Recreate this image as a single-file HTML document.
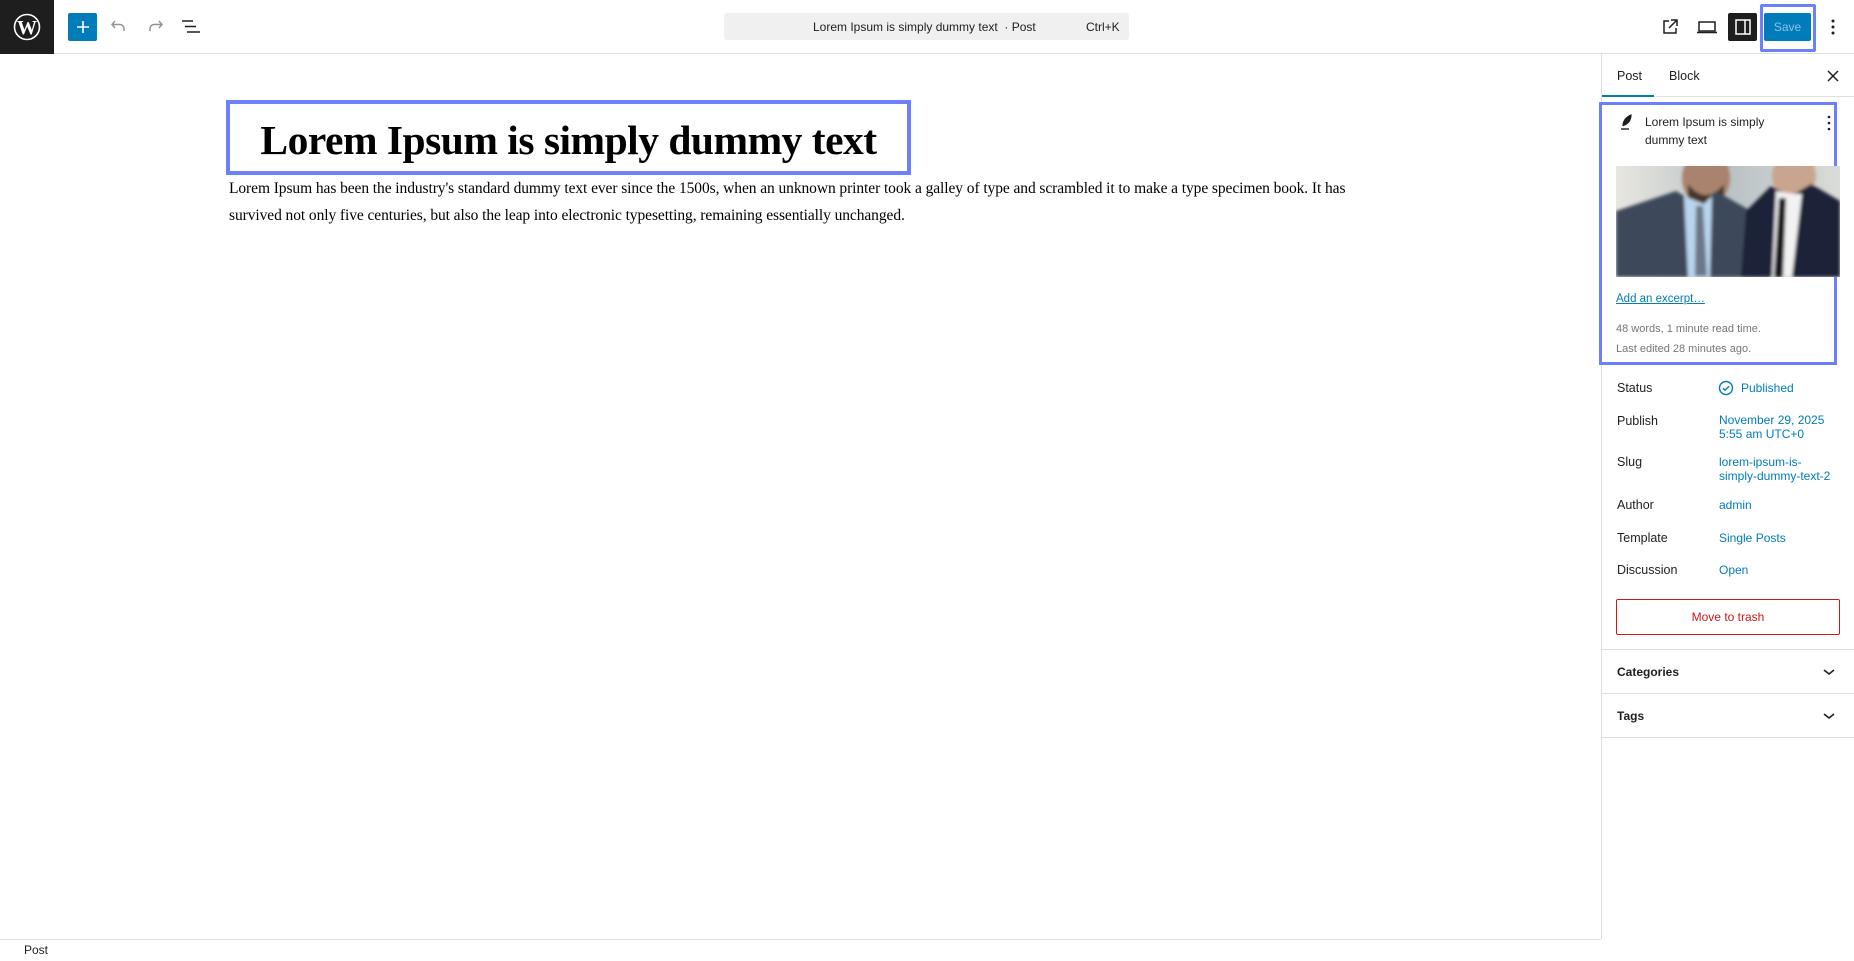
<!DOCTYPE html>
<html><head><meta charset="utf-8"><style>
*{margin:0;padding:0;box-sizing:border-box}
body{width:1854px;height:961px;overflow:hidden;background:#fff;font-family:"Liberation Sans",sans-serif;color:#1e1e1e;position:relative}
.a{position:absolute}
.t{font-size:13px;white-space:nowrap}
.lbl{position:absolute;left:1617px;font-size:12.5px;color:#1e1e1e}
.val{position:absolute;left:1719px;font-size:12px;color:#007cba;line-height:13px}
.hr{position:absolute;left:1602px;width:252px;height:1px;background:#e0e0e0}
</style></head><body>
<!-- top bar -->
<div class="a" style="left:0;top:0;width:1854px;height:54px;border-bottom:1px solid #e0e0e0"></div>
<div class="a" style="left:0;top:0;width:54px;height:54px;background:#1e1e1e"></div>
<svg class="a" style="left:13px;top:13px" width="28" height="28" viewBox="0 0 28 28"><circle cx="14" cy="14" r="12.5" fill="none" stroke="#fff" stroke-width="1.6"/><text x="14" y="21" text-anchor="middle" font-family="Liberation Serif" font-weight="bold" font-size="20" fill="#fff">W</text></svg>
<div class="a" style="left:68px;top:13px;width:29px;height:28px;background:#007cba;border-radius:2px"></div>
<svg class="a" style="left:74px;top:18px" width="18" height="18"><path d="M9 3v12M3 9h12" stroke="#fff" stroke-width="1.6"/></svg>
<svg class="a" style="left:109px;top:16px" width="20" height="20" viewBox="0 0 20 20"><path d="M6 5L3 8.5 6 12M3 8.5h8a4 4 0 0 1 4 4V15" fill="none" stroke="#949494" stroke-width="1.5"/></svg>
<svg class="a" style="left:145px;top:16px" width="20" height="20" viewBox="0 0 20 20"><path d="M14 5l3 3.5-3 3.5M17 8.5H9a4 4 0 0 0-4 4V15" fill="none" stroke="#949494" stroke-width="1.5"/></svg>
<svg class="a" style="left:181px;top:18px" width="20" height="18"><path d="M1 3h11M4 8.5h11M6 14h13" stroke="#1e1e1e" stroke-width="1.6"/></svg>
<div class="a" style="left:724px;top:13px;width:405px;height:27px;background:#f0f0f0;border-radius:3px"></div>
<div class="a t" style="left:813px;top:20px;font-size:12px;color:#1e1e1e">Lorem Ipsum is simply dummy text &nbsp;· Post</div>
<div class="a t" style="left:1086px;top:20px;font-size:12px">Ctrl+K</div>
<svg class="a" style="left:1660px;top:17px" width="20" height="20" viewBox="0 0 20 20"><path d="M9 4H4v12h12v-5M11 3h6v6M17 3l-8 8" fill="none" stroke="#1e1e1e" stroke-width="1.5"/></svg>
<svg class="a" style="left:1695px;top:17px" width="24" height="20" viewBox="0 0 24 20"><rect x="4" y="5" width="16" height="9" fill="none" stroke="#1e1e1e" stroke-width="1.5"/><path d="M2 15.5h20" stroke="#1e1e1e" stroke-width="1.5"/></svg>
<div class="a" style="left:1728px;top:13px;width:29px;height:28px;background:#1e1e1e;border-radius:2px"></div>
<svg class="a" style="left:1733px;top:17px" width="20" height="20" viewBox="0 0 20 20"><rect x="3" y="3" width="14" height="14" fill="none" stroke="#fff" stroke-width="1.5"/><path d="M12 3v14" stroke="#fff" stroke-width="1.5"/></svg>
<div class="a" style="left:1760px;top:4px;width:56px;height:48px;border:3px solid #6b80f9;border-radius:2px"></div>
<div class="a" style="left:1764px;top:13px;width:47px;height:28px;background:#007cba;border-radius:2px;color:#8cc3e6;font-size:12px;text-align:center;line-height:28px">Save</div>
<svg class="a" style="left:1826px;top:16px" width="14" height="22"><circle cx="7" cy="5" r="1.5" fill="#1e1e1e"/><circle cx="7" cy="11" r="1.5" fill="#1e1e1e"/><circle cx="7" cy="17" r="1.5" fill="#1e1e1e"/></svg>

<!-- editor -->
<div class="a" style="left:226px;top:100px;width:685px;height:75px;border:4px solid #6b80f9"></div>
<div class="a" style="left:230px;top:116px;width:677px;text-align:center;font-family:'Liberation Serif',serif;font-weight:bold;font-size:41.5px;white-space:nowrap;letter-spacing:-0.5px;color:#000">Lorem Ipsum is simply dummy text</div>
<div class="a" style="left:229px;top:175px;font-family:'Liberation Serif',serif;font-size:15.5px;line-height:27px;white-space:nowrap;color:#000;letter-spacing:-0.08px">Lorem Ipsum has been the industry's standard dummy text ever since the 1500s, when an unknown printer took a galley of type and scrambled it to make a type specimen book. It has<br>survived not only five centuries, but also the leap into electronic typesetting, remaining essentially unchanged.</div>

<!-- sidebar -->
<div class="a" style="left:1601px;top:54px;width:1px;height:885px;background:#e0e0e0"></div>
<div class="hr" style="top:96px"></div>
<div class="a t" style="left:1617px;top:69px;font-size:12.5px">Post</div>
<div class="a t" style="left:1669px;top:69px;font-size:12.5px">Block</div>
<div class="a" style="left:1602px;top:95px;width:52px;height:2px;background:#007cba"></div>
<svg class="a" style="left:1826px;top:69px" width="14" height="14"><path d="M2 2l10 10M12 2L2 12" stroke="#1e1e1e" stroke-width="1.5"/></svg>

<div class="a" style="left:1599px;top:102px;width:238px;height:263px;border:3px solid #6b80f9"></div>
<svg class="a" style="left:1618px;top:113px" width="16" height="18" viewBox="0 0 16 18"><path d="M5 13C5 8 8 4 13 2c0 5-3 9-7 10M5 13l4-5" fill="#1e1e1e" stroke="#1e1e1e" stroke-width="1.2"/><path d="M3 16h8" stroke="#1e1e1e" stroke-width="1.4"/></svg>
<div class="a" style="left:1645px;top:113px;font-size:12px;line-height:18px">Lorem Ipsum is simply<br>dummy text</div>
<svg class="a" style="left:1824px;top:114px" width="10" height="20"><circle cx="5" cy="3" r="1.3" fill="#1e1e1e"/><circle cx="5" cy="9" r="1.3" fill="#1e1e1e"/><circle cx="5" cy="15" r="1.3" fill="#1e1e1e"/></svg>
<svg class="a" style="left:1616px;top:166px" width="224" height="111" viewBox="0 0 224 111">
<defs><linearGradient id="bg" x1="0" x2="1"><stop offset="0" stop-color="#e8e6e0"/><stop offset=".5" stop-color="#b9c2c4"/><stop offset="1" stop-color="#d9dcd8"/></linearGradient><filter id="b"><feGaussianBlur stdDeviation="1.5"/></filter></defs>
<rect width="224" height="111" fill="url(#bg)"/>
<g filter="url(#b)">
<ellipse cx="90" cy="12" rx="24" ry="28" fill="#a9836d"/>
<path d="M72 18q18 22 36 0v14q-18 12-36 0z" fill="#4a3428"/>
<ellipse cx="178" cy="10" rx="22" ry="24" fill="#c9a58f"/>
<path d="M0 45L60 25 85 40 100 25 135 45 140 111H0z" fill="#3d4a5a"/>
<path d="M68 30L88 38 96 30 94 111H72z" fill="#b9d4ec"/>
<path d="M80 40l7 0 4 70h-12z" fill="#6c7888"/>
<path d="M130 45L155 20 175 30 195 18 224 35V111H125z" fill="#1c2438"/>
<path d="M160 25l18 3 8 0-10 83h-20z" fill="#f2f2f2"/>
<path d="M163 32l7 0-3 79h-9z" fill="#15171c"/>
</g>
</svg>
<div class="a" style="left:1616px;top:293px;font-size:11.5px;color:#007cba;text-decoration:underline">Add an excerpt…</div>
<div class="a" style="left:1616px;top:323px;font-size:11px;color:#757575">48 words, 1 minute read time.</div>
<div class="a" style="left:1616px;top:343px;font-size:11px;color:#757575">Last edited 28 minutes ago.</div>

<div class="lbl" style="top:381px">Status</div>
<svg class="a" style="left:1718px;top:380px" width="16" height="16"><circle cx="8" cy="8" r="6.5" fill="none" stroke="#007cba" stroke-width="1.4"/><path d="M5 8.2l2 2 4-4" fill="none" stroke="#007cba" stroke-width="1.4"/></svg>
<div class="val" style="left:1741px;top:382px">Published</div>
<div class="lbl" style="top:414px">Publish</div>
<div class="val" style="top:413px;line-height:14px">November 29, 2025<br>5:55 am UTC+0</div>
<div class="lbl" style="top:455px">Slug</div>
<div class="val" style="top:455px;line-height:14px">lorem-ipsum-is-<br>simply-dummy-text-2</div>
<div class="lbl" style="top:498px">Author</div>
<div class="val" style="top:499px">admin</div>
<div class="lbl" style="top:531px">Template</div>
<div class="val" style="top:532px">Single Posts</div>
<div class="lbl" style="top:563px">Discussion</div>
<div class="val" style="top:564px">Open</div>
<div class="a" style="left:1616px;top:599px;width:224px;height:36px;border:1px solid #cc1818;border-radius:2px;color:#cc1818;font-size:12px;text-align:center;line-height:34px">Move to trash</div>
<div class="hr" style="top:649px"></div>
<div class="a t" style="left:1617px;top:665px;font-weight:bold;font-size:12px">Categories</div>
<svg class="a" style="left:1822px;top:667px" width="14" height="10"><path d="M2 3l5 4 5-4" fill="none" stroke="#1e1e1e" stroke-width="1.6"/></svg>
<div class="hr" style="top:693px"></div>
<div class="a t" style="left:1617px;top:709px;font-weight:bold;font-size:12px">Tags</div>
<svg class="a" style="left:1822px;top:711px" width="14" height="10"><path d="M2 3l5 4 5-4" fill="none" stroke="#1e1e1e" stroke-width="1.6"/></svg>
<div class="hr" style="top:737px"></div>

<!-- footer -->
<div class="a" style="left:0;top:939px;width:1601px;height:1px;background:#e0e0e0"></div>
<div class="a t" style="left:24px;top:943px;font-size:12px">Post</div>
</body></html>
